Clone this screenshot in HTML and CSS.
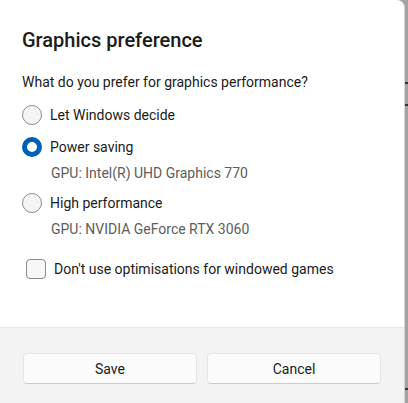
FILE: index.html
```html
<!DOCTYPE html>
<html>
<head>
<meta charset="utf-8">
<link rel="stylesheet" href="styles.css">
</head>
<body>
<div class="screen">
  <div class="dialog">
    <div class="content">
      <h1 class="title">Graphics preference</h1>
      <p class="question">What do you prefer for graphics performance?</p>
      <div class="options">
        <label class="option">
          <span class="radio"></span>
          <span class="label">Let Windows decide</span>
        </label>
        <label class="option">
          <span class="radio checked"></span>
          <span class="label">Power saving</span>
        </label>
        <div class="gpu">GPU: Intel(R) UHD Graphics 770</div>
        <label class="option">
          <span class="radio"></span>
          <span class="label">High performance</span>
        </label>
        <div class="gpu">GPU: NVIDIA GeForce RTX 3060</div>
      </div>
      <label class="check-row">
        <span class="checkbox"></span>
        <span class="label">Don't use optimisations for windowed games</span>
      </label>
    </div>
    <div class="footer">
      <button class="btn">Save</button>
      <button class="btn">Cancel</button>
    </div>
  </div>
  <div class="edge">
    <span class="mark m1"></span>
    <span class="mark m2"></span>
    <span class="mark m3"></span>
  </div>
</div>
</body>
</html>
```
FILE: styles.css
```css
* { box-sizing: border-box; }
html, body { margin: 0; padding: 0; }
body {
  width: 408px;
  height: 403px;
  overflow: hidden;
  background: #ffffff;
  font-family: Roboto, "Noto Sans", sans-serif;
  color: #1b1b1b;
}
.screen {
  display: flex;
  height: 403px;
  background: #a3a3a3;
}
.dialog {
  width: 405px;
  height: 403px;
  background: #ffffff;
  border-top-right-radius: 8px;
  border-right: 1px solid #d6d6d6;
  display: flex;
  flex-direction: column;
}
.content {
  flex: 1;
  padding: 26px 0 0 22px;
}
.title {
  margin: 0;
  font-size: 20px;
  font-weight: 500;
  line-height: 28px;
}
.question {
  margin: 18px 0 0;
  font-size: 14px;
  line-height: 20px;
}
.options {
  margin-top: 13px;
  display: flex;
  flex-direction: column;
}
.option {
  display: flex;
  align-items: center;
  height: 20px;
  gap: 8px;
  margin-bottom: 12px;
}
.label {
  font-size: 14px;
  line-height: 20px;
}
.radio {
  width: 20px;
  height: 20px;
  border-radius: 50%;
  border: 1px solid #8a8a8a;
  background: #f5f5f5;
  flex: none;
}
.radio.checked {
  border: 5px solid #005fb8;
  background: #ffffff;
}
.gpu {
  margin: -6px 0 10px 29px;
  font-size: 14px;
  line-height: 20px;
  color: #5d5d5d;
}
.check-row {
  display: flex;
  align-items: center;
  gap: 8px;
  margin: 10px 0 0 4px;
}
.checkbox {
  width: 20px;
  height: 20px;
  border-radius: 4px;
  border: 1px solid #8a8a8a;
  background: #f7f7f7;
  flex: none;
}
.footer {
  height: 76px;
  background: #f3f3f3;
  border-top: 1px solid #e5e5e5;
  display: flex;
  gap: 10px;
  padding: 25px 0 0 23px;
}
.btn {
  width: 174px;
  height: 31px;
  border: 1px solid #e5e5e5;
  border-bottom-color: #cccccc;
  border-radius: 4px;
  background: #fbfbfb;
  font-family: inherit;
  font-size: 14px;
  color: #1b1b1b;
  padding: 0;
}
.edge {
  flex: 1;
  display: flex;
  flex-direction: column;
  background: #a3a3a3;
}
.mark {
  display: block;
  height: 2px;
  background: #333;
}
.m1 { margin-top: 82px; }
.m2 { margin-top: 20px; }
.m3 { margin-top: 282px; }
```
